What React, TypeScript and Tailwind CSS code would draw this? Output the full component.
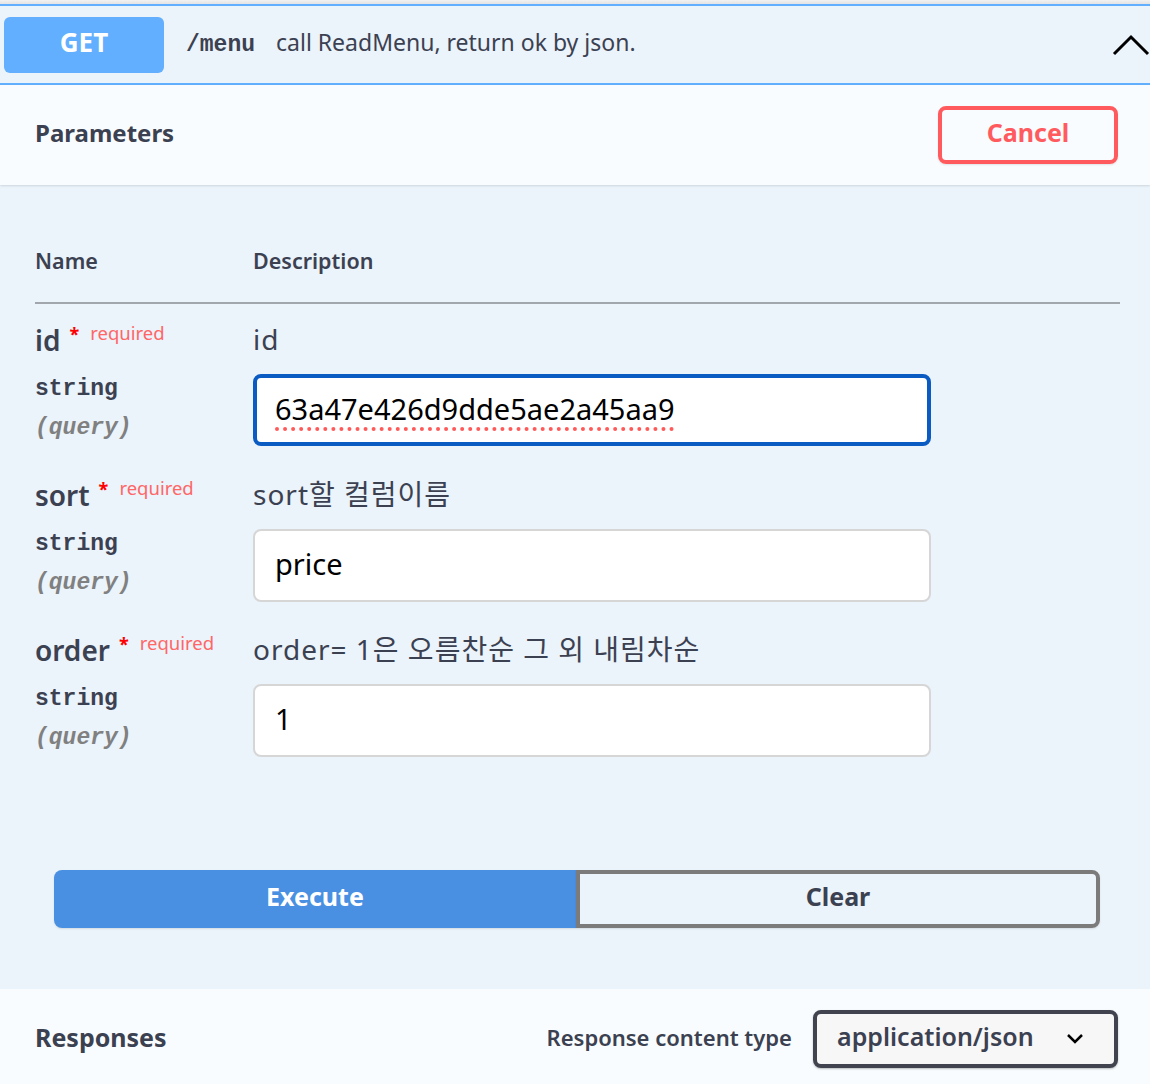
import React from 'react';

const SANS = 'font-["Noto_Sans","Noto_Sans_CJK_KR",sans-serif]';
const MONO = 'font-["Liberation_Mono","Courier_New",monospace]';

type Param = {
  name: string;
  description: string;
  value: string;
  focused?: boolean;
  misspelled?: boolean;
};

const PARAMS: Param[] = [
  { name: 'id', description: 'id', value: '63a47e426d9dde5ae2a45aa9', focused: true, misspelled: true },
  { name: 'sort', description: 'sort할 컬럼이름', value: 'price' },
  { name: 'order', description: 'order= 1은 오름찬순 그 외 내림차순', value: '1' },
];

function ParamRow({ p }: { p: Param }) {
  return (
    <div className="flex pt-[16px]">
      {/* name column */}
      <div className="w-[218px] shrink-0">
        <div className="h-[40px] flex items-center">
          <span className="text-[28px] font-semibold leading-[40px] text-[#3b4151]">{p.name}</span>
          <span className="relative -top-[6px] ml-[9px] text-[18px] font-bold text-[#ff0000]">*</span>
          <span className="relative -top-[7px] ml-[11px] text-[18.5px] text-[#ff6666]">required</span>
        </div>
        <div className={`${MONO} mt-[10px] text-[23px] font-bold leading-[38px] text-[#3b4151]`}>string</div>
        <div className={`${MONO} text-[23px] font-bold italic leading-[40px] text-[#808080]`}>(query)</div>
      </div>

      {/* description column */}
      <div className="w-[678px]">
        <div className="h-[40px] text-[28px] tracking-[1px] leading-[38px] text-[#3b4151]">{p.description}</div>
        {p.focused ? (
          <div className="mt-[14px] mb-[13px] h-[72px] flex items-center bg-white rounded-[8px] border-[4px] border-[#0b5cc2] pl-[18px] pb-[3px] text-[29px] text-black">
            {p.misspelled ? (
              <span className="underline decoration-dotted decoration-[#ff5a5a] decoration-[4px] underline-offset-[8px]">
                {p.value}
              </span>
            ) : (
              <span>{p.value}</span>
            )}
          </div>
        ) : (
          <div className="mt-[14px] mb-[12px] h-[73px] flex items-center bg-white rounded-[8px] border-[2px] border-[#d6d6d6] pl-[20px] pb-[3px] text-[29px] text-black">
            {p.value}
          </div>
        )}
      </div>
    </div>
  );
}

export default function App() {
  return (
    <div className={`${SANS} w-[1150px] h-[1084px] overflow-hidden bg-[#ebf3fb] text-[#3b4151]`}>
      {/* shadow strip above the block */}
      <div className="h-[4px] bg-gradient-to-b from-[#f2f2f2] to-[#e3e3e3]" />

      {/* ── Summary bar ── */}
      <div className="h-[81px] border-y-[2px] border-[#61affe] bg-[#ebf3fb] flex items-center pl-[4px]">
        <div className="w-[160px] h-[56px] rounded-[6px] bg-[#61affe] flex items-center justify-center pb-[5px] text-white text-[26px] font-bold">
          GET
        </div>
        <div className="flex items-baseline pb-[2px]">
          <span className={`${MONO} ml-[22px] text-[23px] font-bold text-[#3b4151]`}>/menu</span>
          <span className="ml-[21px] text-[23px] text-[#3b4151]">call ReadMenu, return ok by json.</span>
        </div>
        <div className="ml-auto mr-[-2px] w-[40px] h-[24px] flex items-center">
          <svg width="40" height="24" viewBox="0 0 40 24" fill="none">
            <polyline points="2,21 19,4 36,21" stroke="#000" strokeWidth="3" />
          </svg>
        </div>
      </div>

      {/* ── Parameters header ── */}
      <div className="h-[100px] bg-[#f9fcfe] shadow-[0_1px_2px_rgba(0,0,0,0.12)] flex items-center pl-[35px] pr-[32px]">
        <span className="pb-[5px] text-[24px] font-bold">Parameters</span>
        <button className="ml-auto w-[180px] h-[58px] rounded-[8px] border-[4px] border-[#ff5b5e] bg-transparent pb-[5px] text-[25px] font-bold text-[#ff5b5e] shadow-[0_1px_2px_rgba(0,0,0,0.1)]">
          Cancel
        </button>
      </div>

      {/* ── Parameters table ── */}
      <div className="pl-[35px] pr-[30px] pt-[56px]">
        <div className="flex h-[63px] items-start border-b-[2px] border-[#a2a6ad] text-[21.5px] font-semibold leading-[40px]">
          <div className="w-[218px]">Name</div>
          <div>Description</div>
        </div>
        {PARAMS.map((p) => (
          <ParamRow key={p.name} p={p} />
        ))}
      </div>

      {/* ── Execute / Clear ── */}
      <div className="flex pl-[54px] pr-[50px] mt-[101px]">
        <button className="w-[522px] h-[58px] rounded-l-[8px] bg-[#4990e2] pb-[4px] text-white text-[25px] font-bold shadow-[0_1px_2px_rgba(0,0,0,0.1)]">
          Execute
        </button>
        <button className="flex-1 h-[58px] rounded-r-[8px] border-[4px] border-[#7b7b7b] bg-transparent pb-[4px] text-[25px] font-bold text-[#3b4151] shadow-[0_1px_2px_rgba(0,0,0,0.1)]">
          Clear
        </button>
      </div>

      {/* ── Responses ── */}
      <div className="mt-[61px] h-[100px] bg-[#f9fcfe] flex items-start pl-[35px] pr-[32px] pt-[21px]">
        <span className="mt-[9px] text-[25px] font-bold">Responses</span>
        <span className="ml-auto mt-[11px] text-[22px] font-semibold">Response content type</span>
        <div className="ml-[21px] w-[305px] h-[58px] rounded-[8px] border-[4px] border-[#41444e] bg-[#f7f7f7] shadow-[0_1px_2px_rgba(0,0,0,0.25)] flex items-center pl-[20px] pr-[30px] pb-[4px]">
          <span className="text-[25px] font-semibold">application/json</span>
          <svg className="ml-auto mt-[4px]" width="18" height="12" viewBox="0 0 18 12" fill="none">
            <polyline points="2,2 9,9 16,2" stroke="#000" strokeWidth="2.5" />
          </svg>
        </div>
      </div>
    </div>
  );
}
